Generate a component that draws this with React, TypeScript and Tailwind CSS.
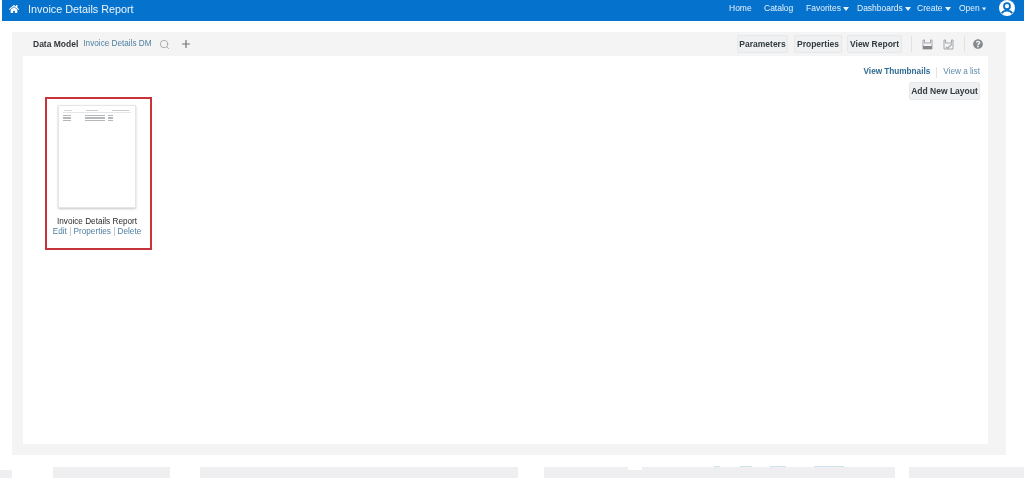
import { Search, Plus } from 'lucide-react';
import { FaHome, FaQuestionCircle } from 'react-icons/fa';

const navItems = [
  { label: 'Home', width: 'w-[35px]' },
  { label: 'Catalog', width: 'w-[42px]' },
  { label: 'Favorites', width: 'w-[51px]', caret: true },
  { label: 'Dashboards', width: 'w-[60px]', caret: true },
  { label: 'Create', width: 'w-[42px]', caret: true },
  { label: 'Open', width: 'w-[27px]', caret: true },
];

const Caret = () => (
  <svg width="6" height="4" viewBox="0 0 6 4" className="ml-[2px] mt-[2px]">
    <path d="M0 0h6L3 4z" fill="#e8f2fa" />
  </svg>
);

const ToolButton = ({ label, className }: { label: string; className: string }) => (
  <button className={`h-[18px] rounded-[2px] bg-[#eef0f1] border border-[#e6e8e9] text-[8.5px] font-bold text-[#333a40] ${className}`}>
    {label}
  </button>
);

const SaveIcon = ({ check }: { check?: boolean }) => (
  <svg width="11" height="11" viewBox="0 0 11 11" className="text-[#a3a7aa]">
    <path d="M1 1h1.5v3h6V1H10v9H1z" fill="none" stroke="currentColor" strokeWidth="1" />
    {check ? (
      <path d="M3 8l1.5 1.5L9 5" fill="none" stroke="currentColor" strokeWidth="1.2" />
    ) : (
      <rect x="1" y="7" width="9" height="3" fill="#84888c" />
    )}
  </svg>
);

// tiny table lines on the layout thumbnail
const ThumbnailColumn = ({ className, rows }: { className: string; rows: number }) => (
  <div className={`flex flex-col gap-[0.5px] ${className}`}>
    {Array.from({ length: rows }).map((_, i) => (
      <div key={i} className="h-[1px] w-full bg-[#b4b8bb]" />
    ))}
  </div>
);

export default function App() {
  return (
    <div className="h-[478px] w-[1024px] overflow-hidden bg-white font-['Liberation_Sans',sans-serif] flex flex-col blur-[0.4px]">
      {/* Top bar */}
      <header className="ml-[2px] h-[21px] shrink-0 bg-[#0572ce] flex items-center text-white">
        <FaHome size={10} className="ml-[7px] -mt-[3px]" />
        <span className="ml-[9px] text-[10.8px] leading-none -mt-[3px] text-[#eef6fc]">Invoice Details Report</span>
        <nav className="ml-auto flex items-center text-[8.5px] text-[#e8f2fa] -mt-[5px]">
          {navItems.map((item) => (
            <div key={item.label} className={`flex items-center ${item.width}`}>
              <span>{item.label}</span>
              {item.caret && <Caret />}
            </div>
          ))}
        </nav>
        <div className="ml-[13px] mr-[9px] -mt-[5px] h-[16px] w-[16px] rounded-full bg-white overflow-hidden">
          <svg width="16" height="16" viewBox="0 0 16 16">
            <circle cx="8" cy="6.2" r="3" fill="none" stroke="#0572ce" strokeWidth="1.8" />
            <path d="M2.8 13.4C4 11 6 10.6 8 10.6s4 .4 5.2 2.8" fill="none" stroke="#0572ce" strokeWidth="1.8" />
          </svg>
        </div>
      </header>

      {/* Report editor panel */}
      <main className="mt-[11px] ml-[12px] w-[994px] h-[423px] shrink-0 bg-[#f4f4f5] px-[11px] pb-[11px] pr-[18px] flex flex-col">
        <div className="h-[24px] shrink-0 flex items-center text-[8.5px]">
          <span className="ml-[10px] font-bold text-[#33383c]">Data Model</span>
          <span className="ml-[5px] text-[8.2px] text-[#4c7f9f]">Invoice Details DM</span>
          <Search size={11} strokeWidth={1.5} className="ml-[7px] text-[#8b9095]" />
          <Plus size={12} strokeWidth={2.4} className="ml-[10px] text-[#6f7478]" />
          <div className="ml-auto flex items-center">
            <ToolButton label="Parameters" className="w-[51px]" />
            <ToolButton label="Properties" className="ml-[6px] w-[48px]" />
            <ToolButton label="View Report" className="ml-[5px] w-[55px]" />
            <div className="ml-[9px] h-[16px] w-px bg-[#e0e2e3]" />
            <div className="ml-[10px]"><SaveIcon /></div>
            <div className="ml-[10px]"><SaveIcon check /></div>
            <div className="ml-[10px] h-[16px] w-px bg-[#e0e2e3]" />
            <FaQuestionCircle size={10} className="ml-[8px] mr-[5px] text-[#85898d]" />
          </div>
        </div>

        <div className="flex-1 bg-white relative pt-[10px] pr-[8px] flex flex-col">
          <div className="flex items-center justify-end text-[8.2px] h-[12px]">
            <span className="font-bold text-[#2f6a92]">View Thumbnails</span>
            <div className="mx-[6px] h-[11px] w-px bg-[#e2e4e5]" />
            <span className="text-[#5d8bab]">View a list</span>
          </div>
          <div className="mt-[4px] flex justify-end">
            <ToolButton label="Add New Layout" className="w-[71px]" />
          </div>

          {/* Layout thumbnail, highlighted in red */}
          <div className="absolute left-[22px] top-[41px] h-[153px] w-[107px] border-2 border-[#c8343c] flex flex-col items-center">
            <div className="mt-[6px] mr-[4px] h-[103px] w-[78px] border border-[#e6e6e6] bg-white shadow-[0_1px_2px_rgba(0,0,0,0.22)]">
              <div className="mx-[5px] mt-[4px] flex gap-[14px]">
                <div className="h-px w-[9px] bg-[#d5d7d9]" />
                <div className="h-px w-[12px] bg-[#c9ccce]" />
                <div className="h-px w-[18px] bg-[#c9ccce]" />
              </div>
              <div className="mx-[4px] mt-[1px] h-px bg-[#e4e6e7]" />
              <div className="mx-[4px] mt-[2px] flex">
                <ThumbnailColumn className="w-[8px]" rows={4} />
                <ThumbnailColumn className="ml-[14px] w-[20px]" rows={4} />
                <ThumbnailColumn className="ml-[3px] w-[5px]" rows={4} />
              </div>
            </div>
            <span className="mt-[9px] mr-[3px] text-[8.2px] leading-[10px] text-[#2b2b2b]">Invoice Details Report</span>
            <div className="mr-[3px] text-[8.2px] leading-[10px] text-[#4c7f9f] whitespace-nowrap">
              Edit <span className="text-[#a8b4bc]">|</span> Properties <span className="text-[#a8b4bc]">|</span> Delete
            </div>
          </div>
        </div>
      </main>

      {/* Strips of the next page section, cut off by the crop */}
      <div className="mt-[12px] h-[11px] shrink-0 flex">
        <div className="mt-[3px] w-[12px] bg-[#efeff1]" />
        <div className="ml-[41px] w-[117px] bg-[#efeff1]" />
        <div className="ml-[30px] w-[318px] bg-[#efeff1]" />
        <div className="ml-[26px] w-[351px] bg-[#efeff1] relative">
          <div className="absolute left-[84px] top-0 h-[3px] w-[14px] bg-white" />
          <div className="absolute left-[170px] -top-[1px] h-[1px] w-[6px] bg-[#cfe3ee]" />
          <div className="absolute left-[196px] -top-[1px] h-[1px] w-[12px] bg-[#cfe3ee]" />
          <div className="absolute left-[226px] -top-[1px] h-[1px] w-[16px] bg-[#cfe3ee]" />
          <div className="absolute left-[270px] -top-[1px] h-[1px] w-[30px] bg-[#cfe3ee]" />
        </div>
        <div className="ml-[14px] w-[115px] bg-[#efeff1]" />
      </div>
    </div>
  );
}
